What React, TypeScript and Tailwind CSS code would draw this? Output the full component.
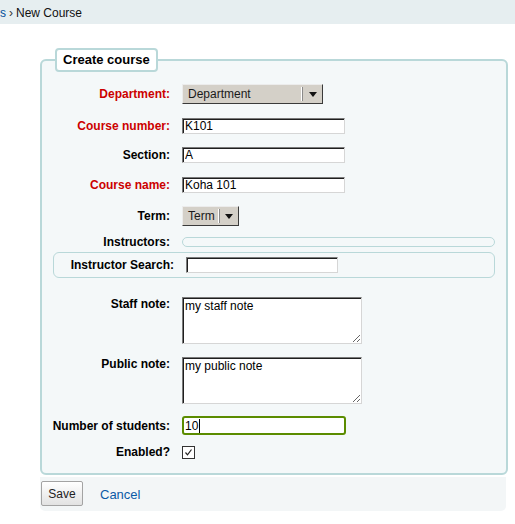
import type { ReactNode } from 'react';

const insetBorder =
  'border border-t-[#7a7a7a] border-l-[#7a7a7a] border-r-[#d6d6d6] border-b-[#d6d6d6] shadow-[inset_1px_1px_0_#1e1e1e]';

function Row({ label, required, top, children, className = '' }: { label: string; required?: boolean; top?: boolean; children: ReactNode; className?: string }) {
  return (
    <li className={`flex ${top ? 'items-start' : 'items-center'} ${className}`}>
      <label className={`w-[128px] shrink-0 text-right text-[12px] leading-[14px] font-bold ${required ? 'text-[#cc0000]' : 'text-black'}`}>
        {label}
      </label>
      <div className="ml-[12px] flex items-center">{children}</div>
    </li>
  );
}

function ClassicSelect({ value, widthClass, textWidthClass }: { value: string; widthClass: string; textWidthClass: string }) {
  return (
    <div className={`flex h-[20px] items-center bg-[#d4d0c8] border border-t-[#ececec] border-l-[#ececec] border-r-[#3a3a3a] border-b-[#3a3a3a] ${widthClass}`}>
      <span className={`pl-[5px] text-[12px] leading-none text-[#1a1a1a] ${textWidthClass}`}>{value}</span>
      <span className="h-[14px] w-[2px] border-l border-r border-l-[#ffffff] border-r-[#8a8a8a]" />
      <span className="flex flex-1 justify-center">
        <svg width="8" height="5" viewBox="0 0 8 5">
          <path d="M0 0 H8 L4 5 Z" fill="#111" />
        </svg>
      </span>
    </div>
  );
}

export default function App() {
  return (
    <div className="min-h-[524px] bg-white font-['Liberation_Sans',Arial,sans-serif] text-black">
      {/* Breadcrumbs */}
      <div className="h-[24px] bg-[#e6eef0] pt-[1px] text-[12px] leading-[24px] whitespace-nowrap">
        <a className="text-[#004d99]">s</a>
        <span className="mx-[3px] text-[#333]">›</span>
        <span className="text-[#111]">New Course</span>
      </div>

      <form className="ml-[40px] mt-[24px] w-[468px]">
        <fieldset className="rounded-[6px] border-2 border-[#b9d8d9] bg-[#f4f8f9] pb-[14px]">
          <legend className="ml-[13px] rounded-[4px] border-2 border-[#b9d8d9] bg-white px-[6px] text-[13px] font-bold leading-[20px]">
            Create course
          </legend>

          <ol className="pt-[12px]">
            <Row label="Department:" required>
              <ClassicSelect value="Department" widthClass="w-[141px]" textWidthClass="w-[118px]" />
            </Row>
            <Row label="Course number:" required className="mt-[14px]">
              <input defaultValue="K101" className={`h-[16px] w-[163px] bg-white px-[2px] text-[12px] leading-[14px] outline-none ${insetBorder}`} />
            </Row>
            <Row label="Section:" className="mt-[13px]">
              <input defaultValue="A" className={`h-[16px] w-[163px] bg-white px-[2px] text-[12px] leading-[14px] outline-none ${insetBorder}`} />
            </Row>
            <Row label="Course name:" required className="mt-[14px]">
              <input defaultValue="Koha 101" className={`h-[16px] w-[163px] bg-white px-[2px] text-[12px] leading-[14px] outline-none ${insetBorder}`} />
            </Row>
            <Row label="Term:" className="mt-[13px]">
              <ClassicSelect value="Term" widthClass="w-[57px]" textWidthClass="w-[35px]" />
            </Row>
            <Row label="Instructors:" className="mt-[9px]">
              <div className="h-[10px] w-[313px] rounded-[5px] border border-[#b9d8d9]" />
            </Row>

            <li className="ml-[11px] mt-[3px] w-[442px]">
              <fieldset className="flex items-center rounded-[6px] border border-[#b9d8d9] py-[4px]">
                <label className="w-[120px] shrink-0 text-right text-[12px] font-bold leading-[14px]">Instructor Search:</label>
                <input className={`ml-[12px] h-[16px] w-[152px] bg-white px-[2px] text-[12px] outline-none ${insetBorder}`} />
              </fieldset>
            </li>

            <Row label="Staff note:" top className="mt-[19px]">
              <textarea
                defaultValue="my staff note"
                className={`h-[47px] w-[180px] bg-white px-[2px] py-[1px] text-[12px] leading-[14px] outline-none ${insetBorder}`}
              />
            </Row>
            <Row label="Public note:" top className="mt-[13px]">
              <textarea
                defaultValue="my public note"
                className={`h-[47px] w-[180px] bg-white px-[2px] py-[1px] text-[12px] leading-[14px] outline-none ${insetBorder}`}
              />
            </Row>
            <Row label="Number of students:" className="mt-[12px]">
              <div className="flex h-[19px] w-[164px] items-center rounded-[3px] border-2 border-[#5b8c00] bg-white pl-[1px] text-[12px] leading-[14px]">
                <span>10</span>
                <span className="ml-[1px] h-[14px] w-[1px] bg-black" />
              </div>
            </Row>
            <Row label="Enabled?" className="mt-[10px]">
              <span className="flex h-[13px] w-[13px] items-center justify-center border border-[#333] bg-white">
                <svg width="9" height="9" viewBox="0 0 9 9">
                  <path d="M1.5 4.5 L3.5 6.8 L7.5 1.5" fill="none" stroke="#222" strokeWidth="1.2" />
                </svg>
              </span>
            </Row>
          </ol>
        </fieldset>

        {/* Actions */}
        <fieldset className="mt-[2px] flex h-[34px] w-[466px] items-start rounded-b-[5px] bg-[#f3f6f7] pl-[1px] pt-[4px]">
          <button type="button" className="h-[25px] w-[42px] rounded-[2px] border border-[#a3a3a3] bg-gradient-to-b from-white to-[#e2e2e2] text-[12px] text-[#222]">
            Save
          </button>
          <a className="ml-[17px] mt-[6px] text-[13px] leading-[16px] text-[#0b5aa6]">Cancel</a>
        </fieldset>
      </form>
    </div>
  );
}
